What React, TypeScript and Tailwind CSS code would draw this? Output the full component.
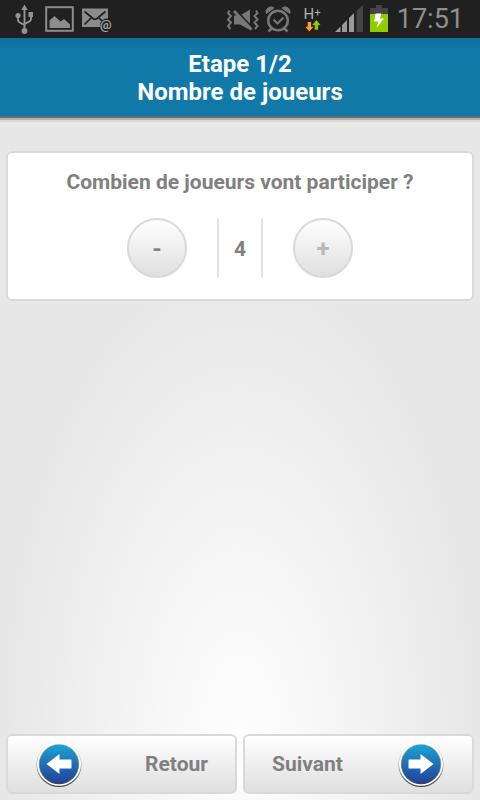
import { useState } from "react";

function UsbIcon() {
  return (
    <svg width="18" height="38" viewBox="15 0 18 38" fill="#939393" aria-hidden="true">
      <path d="M24.5 4.5l3.2 5.5h-6.4z" />
      <circle cx="24.5" cy="31" r="2.9" />
      <circle cx="18" cy="15.5" r="2.6" />
      <rect x="28.5" y="12" width="4.5" height="5" />
      <path
        d="M24.5 9v20M18 16v4q0 2 2 2.7l4.5 2.3M31 15v4q0 2-2 2.7l-4.5 2.3"
        fill="none"
        stroke="#939393"
        strokeWidth="1.9"
      />
    </svg>
  );
}

function PictureIcon() {
  return (
    <svg width="29" height="38" viewBox="45 0 29 38" aria-hidden="true">
      <rect x="46.2" y="7.2" width="26.6" height="23.6" fill="none" stroke="#8c8c8c" strokeWidth="2" />
      <path d="M49.5 28v-7.5l5-4.5 6 5.5 3.5-2.5 6 5.5V28z" fill="#8c8c8c" />
    </svg>
  );
}

function MailIcon() {
  return (
    <svg width="31" height="38" viewBox="81 0 31 38" aria-hidden="true">
      <rect x="81" y="8.5" width="26" height="18.500" fill="#8c8c8c" />
      <path
        d="M83.500 11.500l8.500 7q2 1.500 4 0l8.500-7M83.500 24.500l7-7M104.500 24.500l-7-7"
        fill="none"
        stroke="#202020"
        strokeWidth="1.7"
      />
      <circle cx="105.500" cy="25" r="6.500" fill="#202020" />
      <text x="99" y="28.500" fontSize="13" fontFamily="Roboto, sans-serif" fontWeight="700" fill="#a0a0a0">@</text>
    </svg>
  );
}

function VibrateIcon() {
  return (
    <svg width="32" height="38" viewBox="227 0 32 38" aria-hidden="true">
      <path d="M234 15.500h6l10-6v20.500l-10-5.500h-6z" fill="#777" />
      <path d="M235 9.500l17.500 18.500" stroke="#202020" strokeWidth="2.400" />
      <path d="M234 11l17.500 18.500" stroke="#777" strokeWidth="2.800" />
      <path
        d="M229.500 10.500l-1.500 2.500 3 3-3 3.500 3 3-3 3.500 2.500 3M256 10.500l1.500 2.500-3 3 3 3.500-3 3 3 3.500-2.500 3"
        fill="none"
        stroke="#777"
        strokeWidth="2"
      />
    </svg>
  );
}

function AlarmIcon() {
  return (
    <svg width="26" height="38" viewBox="265 0 26 38" fill="none" stroke="#777" strokeWidth="2.500" aria-hidden="true">
      <circle cx="278" cy="20.500" r="9.800" />
      <path d="M273.500 19.500l4 4 6-6" strokeWidth="2.200" />
      <path d="M271.500 28.500l-3 3M284.500 28.500l3 3" />
      <path d="M266.200 13.500a5 5 0 0 1 7.800-5.500zM289.800 13.500a5 5 0 0 0-7.800-5.500z" fill="#777" strokeWidth="1" />
    </svg>
  );
}

function DataIcon() {
  return (
    <svg width="18" height="38" viewBox="305 0 18 38" aria-hidden="true">
      <text x="304.500" y="18.500" fontSize="15" fontFamily="Roboto, sans-serif" fill="#b0b0b0">H</text>
      <text x="315.500" y="16" fontSize="11" fontFamily="Roboto, sans-serif" fill="#b0b0b0">+</text>
      <path d="M308.700 22h3.400v4.800h2.400l-4.100 4.800-4.100-4.800h2.400z" fill="#ff9d27" />
      <path d="M315.700 29.800h3.400V25h2.400l-4.100-5.100-4.100 5.100h2.400z" fill="#8fc800" />
    </svg>
  );
}

function SignalIcon() {
  return (
    <svg width="29" height="38" viewBox="336 0 29 38" aria-hidden="true">
      <path d="M336 32l5.500-5.500V32z" fill="#9a9a9a" />
      <path d="M343 32v-7l5-5v12zM350 32V18l5-5v19z" fill="#9a9a9a" />
      <path d="M357.500 32V11l6.500-6v27z" fill="#454545" />
    </svg>
  );
}

function BatteryIcon() {
  return (
    <svg width="18" height="38" viewBox="371 0 18 38" aria-hidden="true">
      <path d="M377 5h6v3h6v6h-18V8h6z" fill="#454545" />
      <rect x="371" y="14" width="18" height="18" fill="#8fcc00" />
      <path d="M376.500 13.500h5.800l-1.300 5h4.200L377.500 28l2-6.500h-4.300z" fill="#fff" />
    </svg>
  );
}

function ArrowIcon({ direction }: { direction: "left" | "right" }) {
  const id = `disc-${direction}`;
  return (
    <svg width="48" height="48" viewBox="0 0 48 48" aria-hidden="true">
      <defs>
        <linearGradient id={id} x1="0" y1="0" x2="0" y2="1">
          <stop offset="0" stopColor="#1ba3d5" />
          <stop offset="1" stopColor="#233f96" />
        </linearGradient>
        <linearGradient id={`${id}-rim`} x1="0" y1="0" x2="0" y2="1">
          <stop offset="0" stopColor="#e4e4e4" />
          <stop offset="0.5" stopColor="#aaa" />
          <stop offset="1" stopColor="#444" />
        </linearGradient>
      </defs>
      <circle cx="24" cy="24.5" r="22.6" fill={`url(#${id}-rim)`} />
      <circle cx="24" cy="23.8" r="22" fill="#fff" />
      <circle cx="24" cy="24" r="20.2" fill={`url(#${id}-rim)`} />
      <circle cx="24" cy="24" r="19.6" fill={`url(#${id})`} />
      {direction === "left" ? (
        <path d="M11.500 24l13-10v5.500h12v9h-12V34z" fill="#fff" />
      ) : (
        <path d="M36.500 24l-13-10v5.500h-12v9h12V34z" fill="#fff" />
      )}
    </svg>
  );
}

const roundButton =
  "size-[60px] rounded-full border-2 border-[#d9d9d9] bg-linear-to-b from-white to-[#dfdfdf] pt-0.5 text-2xl font-bold text-[#808080] disabled:text-[#b8b8b8]";
const navButton =
  "flex h-[60px] flex-1 items-center justify-between rounded-md border-2 border-[#d9d9d9] bg-linear-to-b from-white to-[#dfdfdf] px-[27px] font-bold";

const MIN_PLAYERS = 2;
const MAX_PLAYERS = 4;

export default function App() {
  const [players, setPlayers] = useState(MAX_PLAYERS);

  return (
    <div className="flex min-h-screen flex-col bg-[#e7e7e7] bg-[radial-gradient(ellipse_50%_60%_at_50%_92%,#fdfdfd_0%,#fafafa_20%,#e7e7e7_100%)] font-[Roboto,sans-serif] text-[21px] leading-7 text-[#808080]">
      <div className="flex h-[38px] items-center justify-between bg-[#202020] pr-4 pl-[15px]">
        <div className="flex items-center gap-2">
          <UsbIcon />
          <span className="pl-1"><PictureIcon /></span>
          <MailIcon />
        </div>
        <div className="flex items-center gap-1.5">
          <VibrateIcon />
          <AlarmIcon />
          <span className="px-[7px]"><DataIcon /></span>
          <SignalIcon />
          <BatteryIcon />
          <time className="pl-[3px] text-[27px] font-normal text-[#8f8f8f]">17:51</time>
        </div>
      </div>

      <header className="border-b-2 border-[#6b6b6b] bg-linear-to-b from-[#0d6f9b] to-[#1079a8] to-15% pt-3 pb-2.5 text-center text-white shadow-[0_2px_0_#b4b4b4,0_4px_0_#d9d9d9]">
        <h1 className="text-2xl leading-7 font-bold">
          Etape 1/2
          <br />
          Nombre de joueurs
        </h1>
      </header>

      <main className="flex-1 px-1.5 pt-[33px]">
        <section className="rounded-md border-2 border-[#d9d9d9] bg-white pt-[15px] pb-[21px]">
          <h2 className="text-center font-bold">Combien de joueurs vont participer ?</h2>
          <div className="mt-[22px] flex justify-center gap-[30px]">
            <button
              type="button"
              aria-label="Moins de joueurs"
              className={roundButton}
              disabled={players <= MIN_PLAYERS}
              onClick={() => setPlayers(players - 1)}
            >
              -
            </button>
            <output className="flex w-[46px] items-center justify-center border-x-2 border-[#e3e3e3] pt-0.5 font-bold">
              {players}
            </output>
            <button
              type="button"
              aria-label="Plus de joueurs"
              className={roundButton}
              disabled={players >= MAX_PLAYERS}
              onClick={() => setPlayers(players + 1)}
            >
              +
            </button>
          </div>
        </section>
      </main>

      <nav className="flex gap-1.5 p-1.5">
        <button type="button" className={navButton}>
          <ArrowIcon direction="left" />
          Retour
        </button>
        <button type="button" className={navButton}>
          Suivant
          <ArrowIcon direction="right" />
        </button>
      </nav>
    </div>
  );
}
